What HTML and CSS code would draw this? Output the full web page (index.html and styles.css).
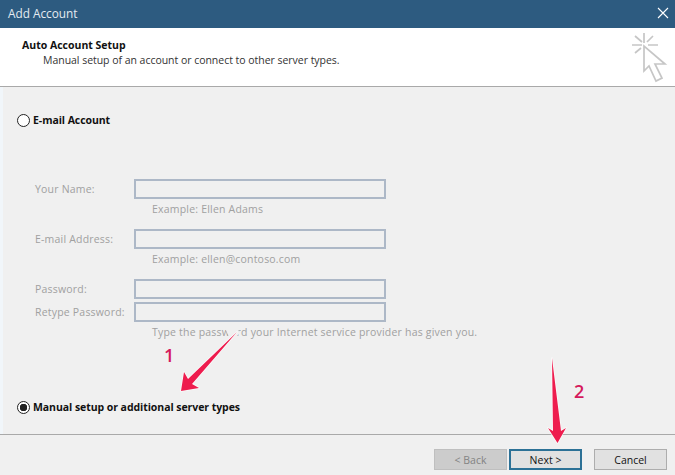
FILE: index.html
```html
<!DOCTYPE html>
<html lang="en">
<head>
<meta charset="utf-8">
<title>Add Account</title>
<link rel="stylesheet" href="styles.css">
</head>
<body>
<div class="dialog">
  <div class="titlebar">
    <span class="title">Add Account</span>
    <svg class="close" width="12" height="12" viewBox="0 0 12 12"><path d="M1 1L11 11M11 1L1 11" stroke="#fff" stroke-width="1.1" fill="none"/></svg>
  </div>
  <div class="header">
    <div class="header-text">
      <div class="header-title">Auto Account Setup</div>
      <div class="header-sub">Manual setup of an account or connect to other server types.</div>
    </div>
    <svg class="wizard-icon" width="40" height="58" viewBox="0 0 40 58">
      <g fill="none" stroke="#c6c6c6" stroke-width="1.7">
        <path d="M14 5V15M2 17H12M18 17H28M5 8L12 14M23 8L17 14M5 25L11 20"/>
        <path d="M14 18V43L19 38L26 53L32 50L25 36H35Z" fill="#fff"/>
      </g>
    </svg>
  </div>
  <div class="main">
    <label class="radio-row first"><span class="radio"></span><span class="radio-label">E-mail Account</span></label>
    <div class="form">
      <span class="label">Your Name:</span><span class="field"></span>
      <span class="example">Example: Ellen Adams</span>
      <span class="label">E-mail Address:</span><span class="field"></span>
      <span class="example">Example: ellen@contoso.com</span>
      <span class="label tight">Password:</span><span class="field tight"></span>
      <span class="label">Retype Password:</span><span class="field"></span>
      <span class="example">Type the password your Internet service provider has given you.</span>
    </div>
    <label class="radio-row second"><span class="radio checked"></span><span class="radio-label">Manual setup or additional server types</span></label>
  </div>
  <div class="footer">
    <span class="btn btn-disabled">&lt; Back</span>
    <span class="btn btn-default">Next &gt;</span>
    <span class="btn btn-cancel">Cancel</span>
  </div>
  <svg class="arrows" width="675" height="475" viewBox="0 0 675 475">
    <path d="M226 330L236 327L240 333L231 341Z" fill="#f0f0f0"/>
    <g fill="#ee1c4e" stroke="#ffffff" stroke-opacity="0.75" stroke-width="1.5" paint-order="stroke" stroke-linejoin="round">
      <path d="M237 332L192 384L199 388L181 391L184 372L188 379Z"/>
      <path d="M552 358L561 431L566 428L557.5 443L548 428L553 431Z"/>
    </g>
  </svg>
  <span class="note note-one">1</span>
  <span class="note note-two">2</span>
</div>
</body>
</html>
```
FILE: styles.css
```css
* { box-sizing: border-box; }
html, body { margin: 0; padding: 0; }
body {
  width: 675px;
  height: 475px;
  overflow: hidden;
  font-family: "Open Sans", "Noto Sans", sans-serif;
  font-size: 10.5px;
}
.dialog {
  position: relative;
  width: 675px;
  height: 475px;
  display: flex;
  flex-direction: column;
  background: #f0f0f0;
}
.titlebar {
  height: 28px;
  flex: none;
  background: #2d5b80;
  color: #e4ebf1;
  display: flex;
  align-items: center;
  justify-content: space-between;
  padding: 0 6px 3px 8px;
}
.title { font-size: 11.8px; }
.header {
  height: 59px;
  flex: none;
  background: #fff;
  border-bottom: 1px solid #a9a9a9;
  display: flex;
  justify-content: space-between;
  padding: 0 5px 0 22px;
}
.header-text { padding-top: 10px; }
.header-title { font-weight: 700; color: #111; line-height: 14px; }
.header-sub { color: #333; padding-left: 21px; line-height: 16px; letter-spacing: -0.03px; }
.main {
  flex: 1;
  border-left: 3px solid #f1f6fa;
  padding-left: 14px;
  display: flex;
  flex-direction: column;
}
.radio-row { display: flex; align-items: center; gap: 3px; height: 14px; }
.radio-row.first { margin-top: 26px; }
.radio-row.second { margin-top: 48px; }
.radio {
  width: 13px;
  height: 13px;
  border: 1px solid #222;
  border-radius: 50%;
  background: #fff;
  flex: none;
  display: block;
}
.radio.checked {
  background: radial-gradient(circle, #222 0 3.5px, #fff 4px);
}
.radio-label { font-weight: 700; color: #111; letter-spacing: -0.06px; }
.form {
  margin-top: 52px;
  display: grid;
  grid-template-columns: 99px 252px;
  margin-left: 18px;
  color: #a0a0a0;
  align-items: center;
  letter-spacing: 0.2px;
}
.field {
  display: block;
  height: 20px;
  border: 2px solid #adb8c7;
}
.tight { margin-bottom: 3px; }
.example {
  grid-column: 2;
  padding-left: 18px;
  line-height: 20px;
  height: 30px;
  white-space: nowrap;
}
.label { white-space: nowrap; }
.footer {
  height: 41px;
  flex: none;
  border-top: 1px solid #a9a9a9;
  display: flex;
  padding: 14px 8px 0 434px;
}
.btn {
  height: 21px;
  width: 73px;
  display: flex;
  align-items: center;
  justify-content: center;
  color: #111;
  background: #e1e1e1;
  border: 1px solid #adadad;
}
.btn-disabled { background: #cccccc; border-color: #bfbfbf; color: #838383; margin-right: 2px; }
.btn-default { border: 2px solid #2c7196; margin-right: 12px; }
.arrows { position: absolute; left: 0; top: 0; pointer-events: none; }
.note { position: absolute; color: #d5195c; font-size: 18px; font-weight: 600; line-height: 20px; }
.note-one { left: 164px; top: 345px; }
.note-two { left: 574px; top: 381px; }
```
